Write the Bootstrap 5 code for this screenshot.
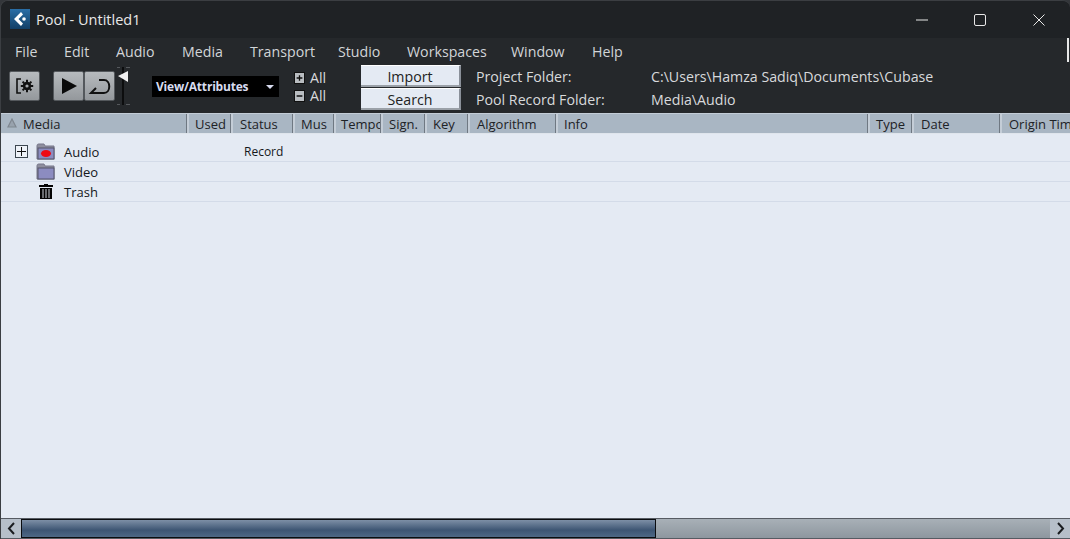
<!DOCTYPE html>
<html lang="en">
<head>
<meta charset="utf-8">
<title>Pool - Untitled1</title>
<link href="https://cdn.jsdelivr.net/npm/bootstrap@5.3.0/dist/css/bootstrap.min.css" rel="stylesheet">
<style>
html,body{height:539px;overflow:hidden;background:#33363a;}
body{font-family:"Open Sans","Noto Sans",sans-serif;font-size:13px;color:#111;}
.win{width:1070px;height:539px;background:#25282b;border-top-left-radius:8px;border-top-right-radius:8px;border:1px solid #3b3e42;border-bottom:0;border-right:0;overflow:hidden;}
.titlebar{height:37px;flex:none;background:#1f2225;color:#e8e8e8;font-size:14.5px;}
.logo{width:20px;height:20px;margin:-1px 6px 0 9px;}
.winctl{margin-right:1px;}
.wbtn{width:58px;height:35px;}
.wbtn:last-child{width:60px;}
.menubar{height:27px;flex:none;color:#d2d5d8;font-size:14.2px;padding-left:14px;}
.mi{white-space:nowrap;line-height:28px;}
.mi1{width:49px}.mi2{width:52px}.mi3{width:66px}.mi4{width:68px}.mi5{width:88px}.mi6{width:69px}.mi7{width:104px}.mi8{width:81px}.mi9{width:60px}
.menumark{width:2px;height:24px;background:#e8e8e8;margin-left:auto;margin-right:1px;}
.toolbar{height:48px;flex:none;color:#d8dadc;font-size:14.2px;}
.tbtn{width:31px;height:30px;margin-top:6px;background:linear-gradient(#b7bbbe,#94989c);border:1px solid #54585c;border-radius:2px;padding:0;flex:none;}
.gear{margin-left:8px;margin-right:13px;}
.slider{width:20px;height:38px;margin-top:2px;margin-right:17px;flex:none;}
.viewsel{width:127px;height:21px;margin-top:11px;background:#000;color:#d8dcf0;font-weight:700;font-size:12px;padding:1px 5px 0 4px;margin-right:16px;letter-spacing:-.2px;}
.caret-mk{width:0;height:0;border-left:4px solid transparent;border-right:4px solid transparent;border-top:4px solid #d8dcf0;}
.allcol{width:66px;margin-top:4px;margin-left:-1px;margin-right:1px;line-height:18px;}
.pm{width:11px;height:12px;background:#b9bdc1;border:1px solid #111;margin-right:5px;flex:none;}
.actcol{width:100px;margin-right:15px;gap:1px;}
.actbtn{height:22px;background:#e4eaf3;color:#222;border-top:1px solid #fff;border-right:2px solid #8a9099;border-bottom:2px solid #9ba1a8;font-size:14.2px;line-height:21px;text-align:center;}
.lab{width:175px;line-height:23px;}
.info-col{line-height:23px;}
.thead{height:21px;flex:none;background:#a9b6c3;border-top:1px solid #c3ccd6;border-bottom:1px solid #dfe5ec;color:#1d2226;font-size:13px;}
.th{height:100%;border-right:1px solid #6f7882;box-shadow:2px 0 0 #c4cdd7;margin-right:2px;padding-left:6px;white-space:nowrap;overflow:hidden;line-height:21px;flex:none;}
.c1{width:186px;padding-left:22px;position:relative}.c2{width:42px}.c3{width:60px;padding-left:7px}.c4{width:39px}.c5{width:45px;padding-left:5px}.c6{width:42px}.c7{width:41px}.c8{width:86px;padding-left:7px}.c9{width:310px}.c10{width:42px}.c11{width:86px;padding-left:7px}.c12{width:70px;border-right:0;box-shadow:none;padding-left:7px;margin-right:0}
.sort{position:absolute;left:6px;top:4px;}
.listbody{height:384px;flex:none;background:#e4eaf3;padding-top:8px;}
.trow{height:20px;border-bottom:1px solid #d3dbe8;color:#15181b;line-height:20px;}
.tree-plus{width:13px;height:13px;border:1px solid #3c4650;background:#eef2f8;margin-left:14px;margin-right:8px;flex:none;}
.ico{width:20px;height:18px;flex:none;}
.spacer{width:35px;flex:none;}
.nm{margin-left:8px;width:180px;}
.rec{font-size:12px;}
.sbar{height:21px;flex:none;background:#565b62;padding-top:1px;}
.sarrow{width:20px;height:19px;background:#b6bfc9;flex:none;}
.sthumb{width:635px;height:19px;background:linear-gradient(#7d8fa6,#3d5573 60%,#4e6885);border:1px solid #0b0d10;flex:none;}
.strack{height:19px;background:linear-gradient(#a8b0b7,#8e979f);}
</style>
</head>
<body>
<div class="win d-flex flex-column">
  <div class="titlebar d-flex align-items-center">
    <svg class="logo" viewBox="0 0 20 20"><defs><linearGradient id="lg" x1="0" y1="0" x2="0" y2="1"><stop offset="0" stop-color="#2a6ea6"/><stop offset="1" stop-color="#123f66"/></linearGradient></defs><rect width="20" height="20" fill="url(#lg)"/><path d="M11 3 L4 10 L11 17 L13 14.5 L8.5 10 L13 5.5Z" fill="#fff"/><circle cx="14" cy="10" r="1.8" fill="#fff"/></svg>
    <span>Pool - Untitled1</span>
    <div class="ms-auto d-flex winctl">
      <div class="wbtn d-flex align-items-center justify-content-center"><svg width="12" height="12" viewBox="0 0 12 12"><path d="M0 6H12" stroke="#e8e8e8" stroke-width="1"/></svg></div>
      <div class="wbtn d-flex align-items-center justify-content-center"><svg width="12" height="12" viewBox="0 0 12 12"><rect x=".5" y=".5" width="11" height="11" rx="1.5" fill="none" stroke="#e8e8e8"/></svg></div>
      <div class="wbtn d-flex align-items-center justify-content-center"><svg width="12" height="12" viewBox="0 0 12 12"><path d="M.5.5 11.5 11.5M11.5.5.5 11.5" stroke="#e8e8e8"/></svg></div>
    </div>
  </div>
  <div class="menubar d-flex align-items-start">
    <span class="mi mi1">File</span><span class="mi mi2">Edit</span><span class="mi mi3">Audio</span><span class="mi mi4">Media</span><span class="mi mi5">Transport</span><span class="mi mi6">Studio</span><span class="mi mi7">Workspaces</span><span class="mi mi8">Window</span><span class="mi mi9">Help</span>
    <div class="menumark"></div>
  </div>
  <div class="toolbar d-flex align-items-start">
    <button class="tbtn gear d-flex align-items-center justify-content-center" aria-label="Settings"><svg width="22" height="20" viewBox="0 0 22 20"><path d="M7 3H3V17H7" fill="none" stroke="#111" stroke-width="1.6"/><circle cx="13" cy="10" r="2.9" fill="none" stroke="#111" stroke-width="2.6"/><path d="M13 3.8V6M13 14V16.2M6.8 10H9M17 10H19.2M8.6 5.6 10.2 7.2M15.8 12.8 17.4 14.4M17.4 5.6 15.8 7.2M10.2 12.8 8.6 14.4" stroke="#111" stroke-width="2"/></svg></button>
    <button class="tbtn d-flex align-items-center justify-content-center" aria-label="Play"><svg width="18" height="18" viewBox="0 0 18 18"><path d="M2 1 17 9 2 17Z" fill="#0a0a0a"/></svg></button>
    <button class="tbtn d-flex align-items-center justify-content-center" aria-label="Loop"><svg width="24" height="17" viewBox="0 0 24 17"><path d="M11 2H16C23 2 23 15 16 15H3L8 10" fill="none" stroke="#111" stroke-width="2"/></svg></button>
    <svg class="slider" viewBox="0 0 20 38"><path d="M2 .5H5M11 .5H15M2 37.5H5M11 37.5H15" stroke="#55585c"/><path d="M8 0V38" stroke="#0c0d0e" stroke-width="2"/><path d="M3 9 13 4V15Z" fill="#f0f0f0"/></svg>
    <div class="viewsel d-flex align-items-center justify-content-between"><span>View/Attributes</span><span class="caret-mk"></span></div>
    <div class="allcol d-flex flex-column">
      <div class="d-flex align-items-center"><svg class="pm" viewBox="0 0 11 12"><path d="M2 6H9M5.5 2.5V9.5" stroke="#111" stroke-width="1.6"/></svg>All</div>
      <div class="d-flex align-items-center"><svg class="pm" viewBox="0 0 11 12"><path d="M2 6H9" stroke="#111" stroke-width="2"/></svg>All</div>
    </div>
    <div class="actcol d-flex flex-column">
      <div class="actbtn">Import</div>
      <div class="actbtn">Search</div>
    </div>
    <div class="lab d-flex flex-column"><span>Project Folder:</span><span>Pool Record Folder:</span></div>
    <div class="info-col d-flex flex-column"><span>C:\Users\Hamza Sadiq\Documents\Cubase</span><span>Media\Audio</span></div>
  </div>
  <div class="thead d-flex">
    <div class="th c1"><svg class="sort" width="10" height="10" viewBox="0 0 10 10"><path d="M5 1 9 9H1Z" fill="#98a2ad" stroke="#7f8790" stroke-width="1.2"/></svg>Media</div>
    <div class="th c2">Used</div><div class="th c3">Status</div><div class="th c4">Mus</div><div class="th c5">Tempo</div><div class="th c6">Sign.</div><div class="th c7">Key</div><div class="th c8">Algorithm</div><div class="th c9">Info</div><div class="th c10">Type</div><div class="th c11">Date</div><div class="th c12">Origin Time</div>
  </div>
  <div class="listbody">
    <div class="trow d-flex align-items-center">
      <div class="tree-plus d-flex align-items-center justify-content-center"><svg width="9" height="9" viewBox="0 0 9 9"><path d="M0 4.5H9M4.5 0V9" stroke="#111"/></svg></div>
      <svg class="ico" viewBox="0 0 20 18"><path d="M1 3C1 1 2 1 3 1H8L9 3H18V16H1Z" fill="#8e8e9e" stroke="#77778a"/><rect x="2" y="5" width="16" height="11" fill="#8c8cc0" stroke="#55556a"/><ellipse cx="10" cy="10.5" rx="5" ry="3.5" fill="#ee0a14"/></svg>
      <span class="nm">Audio</span><span class="rec">Record</span>
    </div>
    <div class="trow d-flex align-items-center">
      <div class="spacer"></div>
      <svg class="ico" viewBox="0 0 20 18"><path d="M1 3C1 1 2 1 3 1H8L9 3H18V16H1Z" fill="#8e8e9e" stroke="#77778a"/><rect x="2" y="5" width="16" height="11" fill="#8c8cc0" stroke="#55556a"/></svg>
      <span class="nm">Video</span>
    </div>
    <div class="trow d-flex align-items-center">
      <div class="spacer"></div>
      <svg class="ico" viewBox="0 0 20 18"><path d="M8 2V1H12V2H17V4H3V2ZM4 5H16V16H4Z" fill="#050505"/><path d="M7 6V15M10 6V15M13 6V15" stroke="#e4eaf3" stroke-width=".9"/></svg>
      <span class="nm">Trash</span>
    </div>
  </div>
  <div class="sbar d-flex">
    <div class="sarrow d-flex align-items-center justify-content-center"><svg width="9" height="13" viewBox="0 0 9 13"><path d="M7 1 2 6.5 7 12" fill="none" stroke="#1a1d20" stroke-width="2"/></svg></div>
    <div class="sthumb"></div>
    <div class="strack flex-grow-1"></div>
    <div class="sarrow d-flex align-items-center justify-content-center"><svg width="9" height="13" viewBox="0 0 9 13"><path d="M2 1 7 6.5 2 12" fill="none" stroke="#1a1d20" stroke-width="2"/></svg></div>
  </div>
</div>
</body>
</html>
